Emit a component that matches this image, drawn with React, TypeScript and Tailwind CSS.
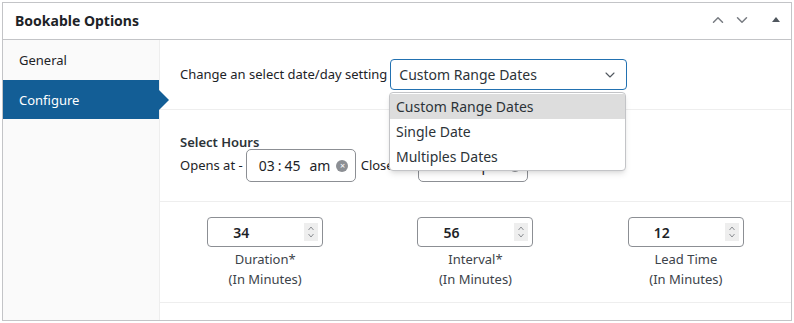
import { ChevronDown, ChevronUp } from 'lucide-react';

const font = { fontFamily: '"Noto Sans", "Open Sans", sans-serif' };

const numbers = [
  { value: '34', label: 'Duration*' },
  { value: '56', label: 'Interval*' },
  { value: '12', label: 'Lead Time' },
];

function Spinner() {
  return (
    <div className="flex h-[18px] w-[14px] flex-col items-center justify-center bg-[#eeeeee]">
      <svg width="8" height="16" viewBox="0 0 8 16" fill="none" stroke="#8c8f94" strokeWidth="1">
        <path d="M1.5 6 L4 3 L6.5 6" />
        <path d="M1.5 10 L4 13 L6.5 10" />
      </svg>
    </div>
  );
}

function TimeBox({ h, m, ap }: { h: string; m: string; ap: string }) {
  return (
    <div className="flex h-[33px] w-[110px] shrink-0 items-center rounded-[5px] border border-[#8c8f94] bg-white pl-3 text-[14px] text-[#1d2327]">
      <span>{h}</span>
      <span className="mx-[3px]">:</span>
      <span>{m}</span>
      <span className="ml-[9px]">{ap}</span>
      <span className="ml-[6px] flex h-[12px] w-[12px] items-center justify-center rounded-full bg-[#8c8f94] text-[9px] leading-none text-white">
        ×
      </span>
    </div>
  );
}

export default function App() {
  return (
    <div className="bg-white p-[2px]" style={font}>
      <div className="h-[319px] overflow-hidden border border-[#c3c4c7] bg-white text-[#1d2327]">
        {/* header */}
        <div className="flex h-[37px] items-center justify-between border-b border-[#c3c4c7] pb-[2px] pl-3 pr-[10px]">
          <h2 className="text-[14px] font-bold">Bookable Options</h2>
          <div className="flex items-center text-[#787c82]">
            <ChevronUp size={18} strokeWidth={2} className="mr-[6px]" />
            <ChevronDown size={18} strokeWidth={2} />
            <svg width="10" height="10" viewBox="0 0 10 10" className="ml-[20px]">
              <path d="M1 7 L5 2 L9 7 Z" fill="#50575e" />
            </svg>
          </div>
        </div>

        <div className="flex h-full">
          {/* sidebar */}
          <div className="w-[157px] shrink-0 border-r border-[#eeeeee] bg-[#fafafa] text-[13px]">
            <div className="flex h-[40px] items-center pl-4 pt-[2px]">General</div>
            <div className="relative flex h-[39px] items-center bg-[#135e96] pl-4 pt-[2px] text-white">
              Configure
              <span className="absolute -right-[10px] top-[10px] h-0 w-0 border-y-[10px] border-l-[10px] border-y-transparent border-l-[#135e96]" />
            </div>
          </div>

          {/* content */}
          <div className="flex-1 text-[13px]">
            <div className="relative flex h-[70px] items-center border-b border-[#eeeeee] pl-5">
              <span className="mr-[3px]">Change an select date/day setting</span>
              <div className="flex h-[31px] w-[237px] items-center justify-between rounded border border-[#2271b1] pl-[8px] pr-[8px] text-[14px] text-[#2c3338]">
                <span>Custom Range Dates</span>
                <ChevronDown size={16} strokeWidth={1.6} className="text-[#50575e]" />
              </div>

              {/* dropdown */}
              <div className="absolute left-[229px] top-[52px] z-10 w-[237px] rounded-sm border border-[#c3c4c7] bg-white py-px text-[14px] text-[#2c3338] shadow-md">
                <div className="flex h-[25px] items-center bg-[#dddddd] pl-[6px]">Custom Range Dates</div>
                <div className="flex h-[25px] items-center pl-[6px]">Single Date</div>
                <div className="flex h-[25px] items-center pl-[6px]">Multiples Dates</div>
              </div>
            </div>

            <div className="flex h-[92px] flex-col justify-center border-b border-[#eeeeee] pb-[2px] pl-5 pt-[8px]">
              <div className="font-semibold leading-[14px] text-[#2c3338]">Select Hours</div>
              <div className="flex items-center">
                <span className="mr-[3px]">Opens at -</span>
                <TimeBox h="03" m="45" ap="am" />
                <span className="ml-[5px] mr-[2px] w-[55px] overflow-hidden whitespace-nowrap">Closes at</span>
                <TimeBox h="06" m="00" ap="pm" />
              </div>
            </div>

            <div className="grid h-[101px] grid-cols-3 border-b border-[#eeeeee] pt-[15px]">
              {numbers.map((n) => (
                <div key={n.label} className="flex flex-col items-center text-[#3c434a]">
                  <div className="flex h-[30px] w-[116px] items-center rounded border border-[#8c8f94] bg-white pr-[4px]">
                    <span className="flex-1 pr-[30px] text-center text-[14px] font-semibold text-[#1d2327]">{n.value}</span>
                    <Spinner />
                  </div>
                  <div className="mt-[2px] leading-[20px]">{n.label}</div>
                  <div className="leading-[20px]">(In Minutes)</div>
                </div>
              ))}
            </div>
          </div>
        </div>
      </div>
    </div>
  );
}
